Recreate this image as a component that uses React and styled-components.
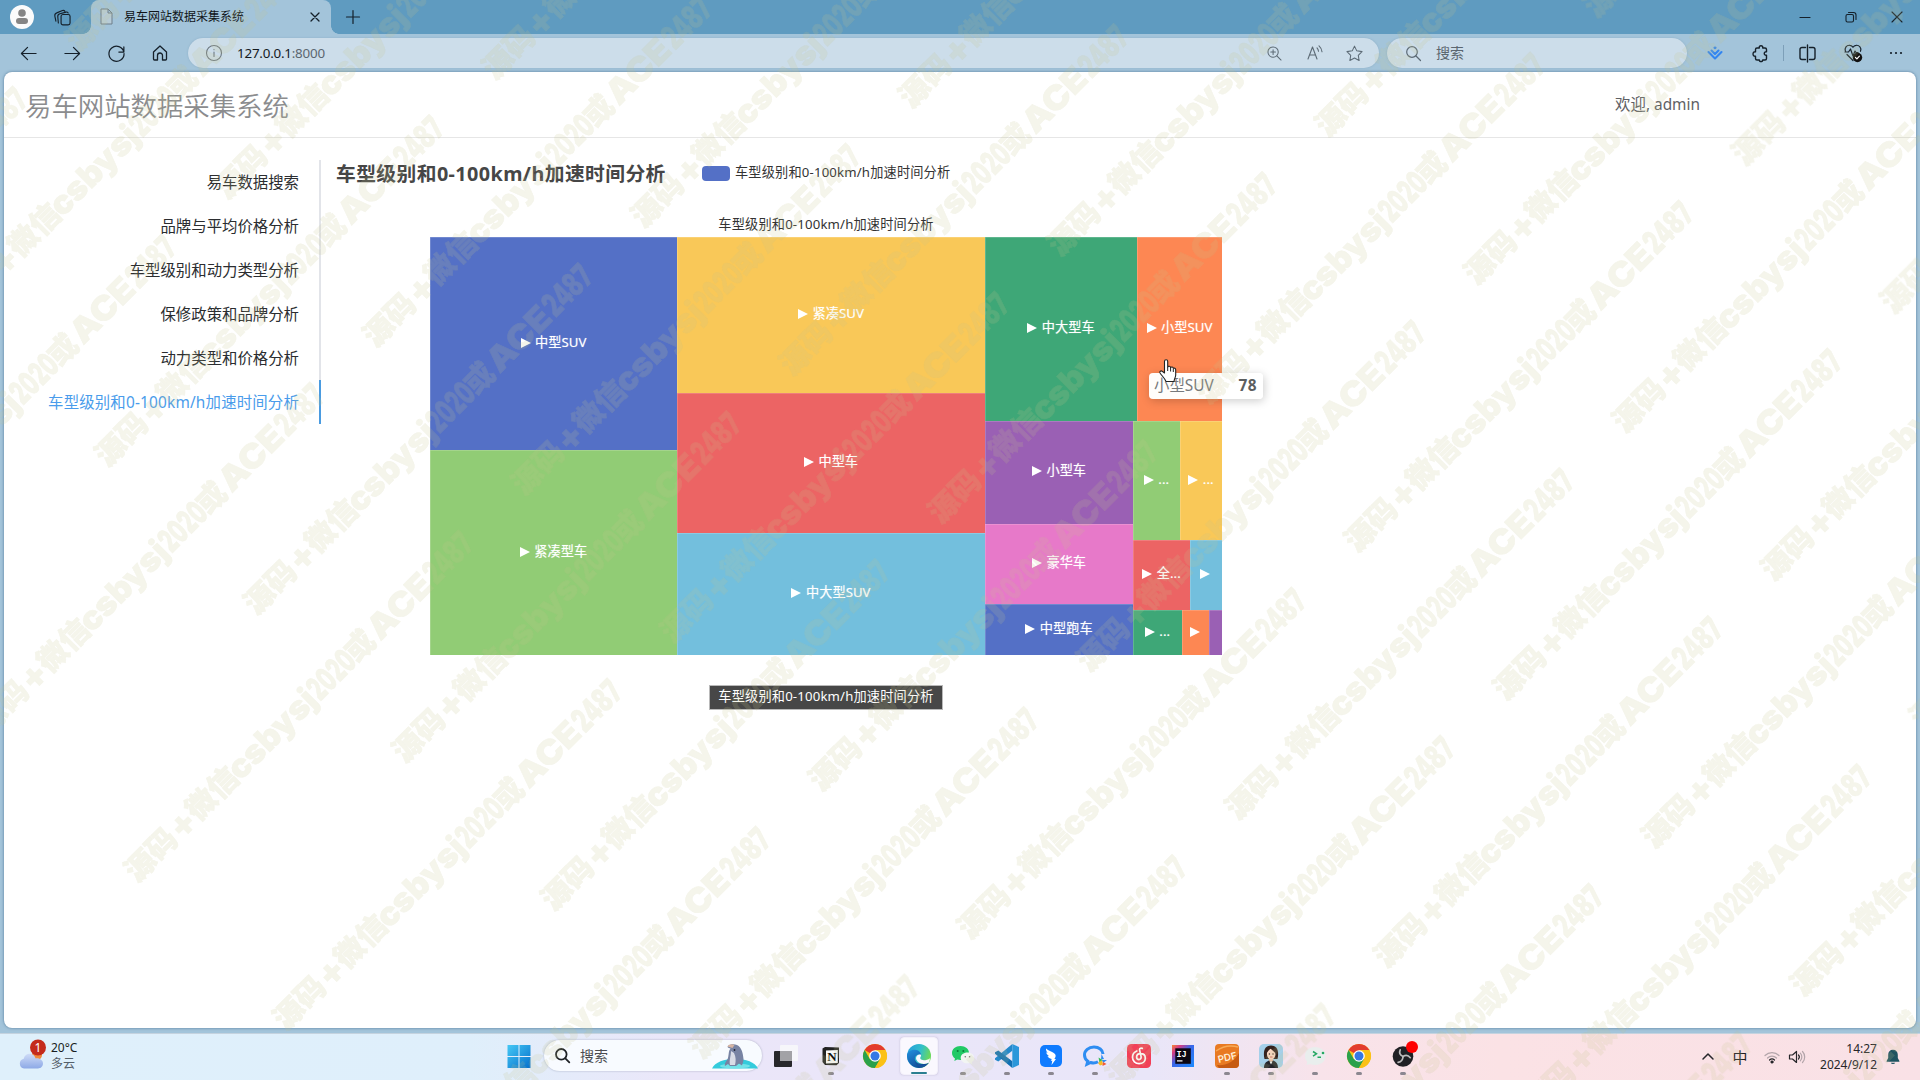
import React from 'react';
import styled, { createGlobalStyle } from 'styled-components';

const Global = createGlobalStyle`
  * { box-sizing: border-box; }
  html, body { margin: 0; padding: 0; overflow: hidden; }
  body { font-family: "Noto Sans", "Noto Sans CJK SC", sans-serif; color: #303133; }
`;

const Screen = styled.div`
  position: relative;
  width: 1920px;
  height: 1080px;
  display: flex;
  flex-direction: column;
  background: #a3c4da;
  overflow: hidden;
`;

/* ---------- browser chrome ---------- */
const TitleBar = styled.div`
  height: 34px;
  display: flex;
  align-items: stretch;
  background: #5f9bc0;
`;
const TitleCell = styled.div`
  width: ${(p) => p.$w}px;
  display: flex;
  align-items: center;
  justify-content: center;
`;
const Avatar = styled.div`
  width: 24px;
  height: 24px;
  border-radius: 50%;
  background: #fbfbfb;
  display: flex;
  align-items: center;
  justify-content: center;
`;
const Tab = styled.div`
  position: relative;
  width: 240px;
  margin-left: 11px;
  padding: 0 10px 1px 9px;
  display: flex;
  align-items: center;
  background: #a3c4da;
  border-radius: 8px 8px 0 0;
  &::before, &::after {
    content: '';
    position: absolute;
    bottom: 0;
    width: 8px;
    height: 8px;
  }
  &::before { left: -8px; background: radial-gradient(circle at 0 0, #5f9bc0 7.5px, #a3c4da 8px); }
  &::after { right: -8px; background: radial-gradient(circle at 100% 0, #5f9bc0 7.5px, #a3c4da 8px); }
`;
const TabTitle = styled.span`
  flex: 1;
  margin-left: 11px;
  font-size: 12px;
  line-height: 16px;
  color: #101418;
`;
const Grow = styled.div`flex: 1;`;

const ToolBar = styled.div`
  height: 38px;
  padding-left: 6px;
  display: flex;
  align-items: center;
`;
const ToolCell = styled.div`
  width: ${(p) => p.$w || 44}px;
  height: 38px;
  display: flex;
  align-items: center;
  justify-content: center;
`;
const Pill = styled.div`
  width: ${(p) => p.$w}px;
  height: 30px;
  margin-left: ${(p) => p.$ml}px;
  padding: 0 0 0 ${(p) => p.$pl}px;
  display: flex;
  align-items: center;
  border-radius: 15px;
  background: #ccddea;
  box-shadow: 0 0 2px rgba(90, 130, 160, 0.35);
  font-size: 14px;
  line-height: 20px;
  color: #5b6670;
`;
const Url = styled.span`
  flex: 1;
  margin-left: 15px;
  font-size: 13.4px;
  letter-spacing: -0.22px;
  b { font-weight: 400; color: #14191e; }
`;
const PillText = styled.span`margin-left: 15px;`;
const Divider = styled.div`
  width: 1px;
  height: 16px;
  background: #7d9fb8;
`;

const Line = styled.svg`
  display: block;
  flex: none;
  width: ${(p) => p.$s || 18}px;
  height: ${(p) => p.$s || 18}px;
  fill: none;
  stroke: ${(p) => p.$c || '#15202a'};
  stroke-width: ${(p) => p.$sw || 1.3};
  stroke-linecap: round;
  stroke-linejoin: round;
  overflow: visible;
`;

/* ---------- web page ---------- */
const Page = styled.div`
  width: 1912px;
  height: 956px;
  margin: 0 4px;
  flex: none;
  border-radius: 8px;
  background: #fff;
  box-shadow: 0 0 3px rgba(50, 90, 125, 0.7);
`;
const Header = styled.header`
  height: 66px;
  padding: 2px 216px 0 21px;
  display: flex;
  align-items: center;
  justify-content: space-between;
  border-bottom: 1px solid #e6e6e6;
`;
const Brand = styled.h1`
  margin: 0;
  font-size: 26.4px;
  line-height: 36px;
  font-weight: 350;
  color: #8b8c8e;
`;
const Welcome = styled.span`
  margin-bottom: 1px;
  font-size: 15.4px;
  line-height: 22px;
  color: #5e6064;
`;
const Body = styled.div`
  display: flex;
  padding-top: 22px;
`;
const SideNav = styled.nav`
  width: 317px;
  flex: none;
  display: flex;
  flex-direction: column;
`;
const NavItem = styled.a`
  height: 44px;
  padding: 2px 20px 0 0;
  font-size: 15.4px;
  line-height: 42px;
  letter-spacing: ${(p) => (p.$active ? 0.18 : 0)}px;
  text-align: right;
  color: ${(p) => (p.$active ? '#4a9ceb' : '#2b2d30')};
  border-right: 2px solid ${(p) => (p.$active ? '#4a9be0' : '#e2e4e9')};
`;
const ChartArea = styled.section`
  width: 980px;
  padding-left: 15px;
`;
const ChartTop = styled.div`
  height: 28px;
  padding-bottom: 1px;
  display: flex;
  align-items: center;
`;
const ChartTitle = styled.h2`
  margin: 0;
  width: 366px;
  padding-top: 1px;
  font-size: 19.8px;
  line-height: 28px;
  letter-spacing: 0.4px;
  font-weight: 700;
  color: #464646;
  white-space: nowrap;
`;
const LegendMark = styled.i`
  width: 28px;
  height: 15.5px;
  border-radius: 4px;
  background: #5470c6;
`;
const LegendText = styled.span`
  margin-left: 5px;
  padding-bottom: 3px;
  font-size: 13.2px;
  line-height: 18px;
  letter-spacing: 0.17px;
  color: #333;
`;
const Graph = styled.div`
  width: 792px;
  margin: 26px 0 0 94px;
  display: flex;
  flex-direction: column;
  align-items: center;
`;
const UpperLabel = styled.div`
  height: 23px;
  font-size: 13.2px;
  line-height: 20px;
  letter-spacing: 0.17px;
  color: #333;
`;
const TreeMap = styled.div`
  width: 792px;
  height: 418px;
  display: flex;
`;
const Split = styled.div`
  flex: ${(p) => p.$f} 0 0;
  min-width: 0;
  min-height: 0;
  display: flex;
  flex-direction: ${(p) => (p.$row ? 'row' : 'column')};
`;
const Tile = styled.div`
  flex: ${(p) => p.$f} 0 0;
  min-width: 0;
  min-height: 0;
  display: flex;
  align-items: center;
  justify-content: center;
  background: ${(p) => p.$c};
  box-shadow: inset 0.5px 0.5px 0 rgba(255, 255, 255, 0.35);
`;
const TileLabel = styled.span`
  display: flex;
  align-items: center;
  margin-bottom: 4px;
  color: #fff;
  font-size: 13.2px;
  line-height: 18px;
  white-space: nowrap;
  letter-spacing: 0.05px;
  text-shadow: 0 0 1px rgba(255, 255, 255, 0.5);
`;
const Arrow = styled.i`
  width: 0;
  height: 0;
  margin: 2px ${(p) => (p.$alone ? 2 : 4.5)}px 0 0;
  border-left: 10px solid #fff;
  border-top: 5.5px solid transparent;
  border-bottom: 5.5px solid transparent;
`;
const Crumb = styled.div`
  width: 234px;
  height: 25px;
  margin-top: 30px;
  border: 1px solid #b9b9b9;
  background: #474747;
  color: #fff;
  font-size: 13.2px;
  line-height: 21px;
  letter-spacing: 0.17px;
  text-align: center;
`;
const Tip = styled.div`
  position: absolute;
  left: 1149px;
  top: 373px;
  width: 114px;
  height: 26px;
  padding: 0 6px 1px 5px;
  display: flex;
  align-items: center;
  justify-content: space-between;
  border-radius: 4px;
  background: rgba(255, 255, 255, 0.98);
  box-shadow: 1px 2px 10px rgba(0, 0, 0, 0.2);
  font-size: 15.4px;
  line-height: 24px;
  color: #77797c;
  b { font-weight: 700; letter-spacing: 0.4px; color: #5c5e60; }
`;
const Pointer = styled.svg`
  position: absolute;
  left: 1158px;
  top: 358px;
  width: 20px;
  height: 26px;
`;

/* ---------- task bar ---------- */
const TaskBar = styled.footer`
  height: 47px;
  margin-top: 5px;
  display: flex;
  align-items: stretch;
  border-top: 1px solid #c5d3df;
  background: linear-gradient(90deg, #dff0fb 0, #dfeffb 470px, #ebe6f9 680px, #e9e6f9 1150px, #f8e3ea 1320px, #fbe2e5 1500px, #f9e1e6 100%);
`;
const Weather = styled.div`
  width: 497px;
  padding-left: 18px;
  display: flex;
  align-items: center;
`;
const WeatherText = styled.div`
  margin: 0 0 2px 7px;
  font-size: 12px;
  line-height: 16px;
  color: #1a1e22;
  span { color: #56606a; }
`;
const TaskCell = styled.div`
  width: ${(p) => p.$w || 44}px;
  flex: none;
  height: 46px;
  display: flex;
  flex-direction: column;
  align-items: center;
  padding-top: ${(p) => (p.$active ? 3 : 10)}px;
`;
const ActiveBox = styled.div`
  width: 38px;
  height: 38px;
  padding-top: 6px;
  display: flex;
  flex-direction: column;
  align-items: center;
  border-radius: 4px;
  border: 1px solid #f3f0fa;
  background: #faf8fe;
  box-shadow: 0 0 2px rgba(120, 110, 150, 0.35);
`;
const Dot = styled.i`
  width: ${(p) => (p.$on ? 16 : 6)}px;
  height: 3px;
  margin-top: 4px;
  border-radius: 2px;
  background: ${(p) => (p.$on ? '#2b7f90' : '#8b8790')};
`;
const Art = styled.svg`
  display: block;
  flex: none;
  width: ${(p) => p.$w || 24}px;
  height: ${(p) => p.$h || 24}px;
  overflow: visible;
`;
const TaskSearch = styled.div`
  width: 218px;
  height: 31px;
  margin: 6px 2px 0 3px;
  padding: 0 4px 0 11px;
  display: flex;
  align-items: center;
  border-radius: 16px;
  background: #f8fbff;
  box-shadow: 0 0 2px rgba(80, 90, 120, 0.45);
  font-size: 14px;
  line-height: 20px;
  color: #4a4c50;
  span { flex: 1; margin-left: 10px; }
`;
const Tray = styled.div`
  display: flex;
  align-items: center;
`;
const TrayCell = styled.div`
  width: ${(p) => p.$w}px;
  display: flex;
  justify-content: center;
  font-size: 15px;
  line-height: 20px;
  color: #1c1c20;
`;
const Clock = styled.div`
  width: 68px;
  margin-bottom: 1px;
  font-size: 12px;
  line-height: 16px;
  text-align: right;
  color: #26262a;
  white-space: nowrap;
`;

/* ---------- repeated overlay mark ---------- */
const MarkLayer = styled.svg`
  position: absolute;
  left: 0;
  top: 0;
  width: 1920px;
  height: 1080px;
  pointer-events: none;
  text {
    font-family: "Inter", "Noto Sans CJK SC", sans-serif;
    font-weight: 900;
    fill: #c3c38c;
    stroke: #c3c38c;
    stroke-width: 0.6px;
  }
`;
const markParts = [
  ['源码', -15, 60, 30, 11],
  ['+', 47, 24, 36, 13],
  ['微信', 71, 61, 30, 11],
  ['csbysj', 130, 112, 33, 12],
  ['2020', 243, 54, 33, 12],
  ['或', 296, 29, 30, 11],
  ['ACE', 328, 77, 33, 12],
  ['2487', 407, 56, 33, 12],
];
const marks = [];
for (let b = -2; b < 7; b += 1) {
  for (let a = -8; a < 9; a += 1) {
    const x = 230 + a * 148.6 + b * 416.5;
    const y = 182 + a * 148 + b * 28.5;
    if (x > -320 && x < 1930 && y > -10 && y < 1400) marks.push([x, y]);
  }
}
function Marks() {
  return (
    <MarkLayer viewBox="0 0 1920 1080">
      <g opacity="0.18">
        {marks.map(([x, y]) => (
          <g key={`${x}-${y}`} transform={`translate(${x} ${y}) rotate(-45)`}>
            {markParts.map(([t, tx, len, size, base]) => (
              <text key={t} x={tx} y={base} fontSize={size} textLength={len} lengthAdjust="spacingAndGlyphs">{t}</text>
            ))}
          </g>
        ))}
      </g>
    </MarkLayer>
  );
}

const NAME = '车型级别和0-100km/h加速时间分析';
const nav = ['易车数据搜索', '品牌与平均价格分析', '车型级别和动力类型分析', '保修政策和品牌分析', '动力类型和价格分析', NAME];

const C = {
  blue: '#5470c6', green: '#91cc75', yellow: '#f9c858', red: '#ec6464', sky: '#73bfdd',
  teal: '#3ea777', orange: '#fd8753', purple: '#9a60b4', pink: '#e779c9',
};

function Cell({ f, c, label, bare }) {
  return (
    <Tile $f={f} $c={c}>
      {!bare && (
        <TileLabel>
          <Arrow $alone={!label} />
          {label}
        </TileLabel>
      )}
    </Tile>
  );
}

function Chrome() {
  return (
    <Art viewBox="0 0 24 24">
      <circle cx="12" cy="12" r="12" fill="#fbc116" />
      <path d="M12 12 1.6 6A12 12 0 0 1 22.4 6H12z" fill="#e33b2e" />
      <path d="M1.6 6A12 12 0 0 0 12 24l5.2-9L12 12 6.800 15z" fill="#2aa14b" />
      <path d="M22.4 6H12l5.2 9L12 24A12 12 0 0 0 22.400 6z" fill="#fbc116" />
      <circle cx="12" cy="12" r="5.8" fill="#fff" />
      <circle cx="12" cy="12" r="4.5" fill="#3578e5" />
    </Art>
  );
}

const apps = [
  ['notion', (
    <Art viewBox="0 0 24 24">
      <path d="M3.5 4.500 6 3l14 .5V19l-2.500 2.200L6 21l-2.500-3z" fill="#222" />
      <path d="M7 6.500 18.800 6v13L7 19.600z" fill="#fafafa" />
      <text x="12.900" y="17.400" textAnchor="middle" fontFamily="Liberation Serif, serif" fontWeight="700" fontSize="13" fill="#111">N</text>
    </Art>
  ), 1],
  ['chrome', <Chrome />, 0],
  ['edge', (
    <Art viewBox="0 0 24 24">
      <defs>
        <linearGradient id="e1" x1="0" y1="0" x2="1" y2="0.3"><stop offset="0" stopColor="#259bdc" /><stop offset="0.6" stopColor="#32bfca" /><stop offset="1" stopColor="#69d85c" /></linearGradient>
        <linearGradient id="e2" x1="0" y1="0" x2="0.6" y2="1"><stop offset="0" stopColor="#218fe0" /><stop offset="1" stopColor="#114b94" /></linearGradient>
      </defs>
      <circle cx="12" cy="12" r="12" fill="url(#e1)" />
      <path d="M0 12c0-4 4-6.500 8-6.200 3.500.3 6 2.600 6.100 5.300-3-1.600-6.300.3-6.300 3.700 0 4.200 5 6.600 13.800 4.300A12 12 0 0 1 0 12z" fill="url(#e2)" />
      <path d="M14 10.800c.6 1.800-1.300 2.500-.6 4 1.100 2 6 2 9.600-.6l-.8 4.600c-5 2.300-11.500 1.200-13-3.500-.7-3 2-5.500 4.800-4.500z" fill="#faf8fe" />
      <path d="M22 18.300C18 22.700 10 22.500 7.900 16c.3 4 3 6.800 7 7.600 3-.8 5.500-2.600 7.100-5.300z" fill="#17529c" />
    </Art>
  ), 2],
  ['wechat', (
    <Art viewBox="0 0 24 24">
      <path d="M9.500 2C4.500 2 1 5 1 9c0 2.300 1.200 4.200 3 5.500L3.300 17l3-1.400c1 .3 2 .4 3.200.4 5 0 8.500-3 8.500-7s-3.500-7-8.500-7z" fill="#21c965" />
      <circle cx="6.700" cy="7" r="1" fill="#0b7a3a" /><circle cx="12.300" cy="7" r="1" fill="#0b7a3a" />
      <path d="M16.500 8.500c-4 0-6.800 2.400-6.800 5.400s2.900 5.400 6.800 5.400c.8 0 1.600-.1 2.300-.3l2.500 1.200-.6-2c1.600-1 2.500-2.500 2.500-4.300 0-3-2.800-5.400-6.700-5.400z" fill="#f2f5f3" />
      <circle cx="14.300" cy="12.800" r=".8" fill="#777" /><circle cx="18.600" cy="12.800" r=".8" fill="#777" />
    </Art>
  ), 1],
  ['vscode', (
    <Art viewBox="0 0 24 24">
      <path d="M17.300 0v6.800L3.300 17.600 0 15.700v-1.500z" fill="#2489ca" />
      <path d="M17.300 24v-6.800L3.300 6.400 0 8.300v1.500z" fill="#1070b3" />
      <path d="M17.300 0 24 3v18l-6.700 3z" fill="#2b97da" />
    </Art>
  ), 1],
  ['wing', (
    <Art viewBox="0 0 24 24">
      <rect x="1" y="1" width="22" height="22" rx="5" fill="#0f7bff" />
      <path d="M7 4.500c2 2 7 3.200 9 5.500 1.300 1.500.5 3.500-.6 5h1.600L12.500 21l.8-4.200h-1.500l1-1.800c-2.500-.5-4-1.800-4.300-2.900l1.800.2C8.300 11 7.200 9.500 7.300 8.300l1.500.7C7.500 7.700 6.800 6 7 4.500z" fill="#fff" />
    </Art>
  ), 1],
  ['bubble', (
    <Art viewBox="0 0 24 24">
      <path d="M11 3C5.500 3 1.500 6.500 1.500 11c0 2.700 1.300 4.800 3.300 6.200L4 20.300l3.600-1.800c3 .9 5.600.3 7.400-.8" fill="none" stroke="#2e8df2" strokeWidth="3" />
      <path d="M11 3c5 0 8.800 3 9 7" fill="none" stroke="#2e8df2" strokeWidth="3" />
      <path d="m18.500 10 2.500 5-3 .5zM24 16l-4 3-1-3z" fill="#2e8df2" />
      <path d="m15.500 13.500 4 2.500-3 2.500z" fill="#32bd55" />
      <path d="m15 19 4-2.500 1 4-3 1z" fill="#f7b924" />
      <path d="m20 18 3.500 2-4 2z" fill="#f05a35" />
    </Art>
  ), 1],
  ['music', (
    <Art viewBox="0 0 24 24">
      <rect width="24" height="24" rx="4.500" fill="#f23f57" />
      <path d="M15.300 4.400c-1.800-.8-3 .2-2.700 1.700l1.500 6.500c.3 1.900-.8 3-2.100 3-1.500 0-2.400-1.100-2.400-2.500 0-2 1.700-3.500 4-3.500 3 0 4.700 2 4.700 4.600 0 3.200-2.700 5.500-6.200 5.500-3.800 0-6.600-2.700-6.600-6.400 0-3 1.700-5.300 4.300-6.300" fill="none" stroke="#fff" strokeWidth="1.700" strokeLinecap="round" />
    </Art>
  ), 0],
  ['ij', (
    <Art viewBox="0 0 24 24">
      <defs><linearGradient id="ij" x1="0" y1="0" x2="1" y2="1"><stop offset="0" stopColor="#f78a35" /><stop offset=".2" stopColor="#d63b83" /><stop offset=".45" stopColor="#3b66e8" /><stop offset="1" stopColor="#1b8cff" /></linearGradient></defs>
      <rect x="1" y="1" width="22" height="22" fill="url(#ij)" />
      <rect x="4.300" y="4.300" width="15.500" height="15.500" fill="#0c0712" />
      <text x="5.500" y="12.500" fontFamily="Liberation Mono, monospace" fontWeight="700" fontSize="8.500" fill="#fff">IJ</text>
      <rect x="6" y="16.300" width="5.500" height="1.200" fill="#fff" />
    </Art>
  ), 0],
  ['pdf', (
    <Art viewBox="0 0 24 24">
      <rect width="24" height="24" rx="4" fill="#e97a22" />
      <path d="M2 21C12 22 20 17 24 9v11a4 4 0 0 1-4 4H4z" fill="#c65a12" />
      <path d="M1 7C8 2 16 1 23 3" stroke="#f7ab58" strokeWidth="1.500" fill="none" />
      <text x="2.500" y="17" fontFamily="Inter, sans-serif" fontWeight="600" fontSize="9.800" fill="#fff0dc" transform="rotate(-13 12 13)">PDF</text>
    </Art>
  ), 1],
  ['person', (
    <Art viewBox="0 0 24 24">
      <rect width="24" height="24" rx="5" fill="#a5d0ea" />
      <path d="M5.500 15C3.500 6 6.500 1.500 12 1.500S20.500 6 18.500 15z" fill="#35231f" />
      <path d="M10 13h4v5h-4z" fill="#efbfa8" />
      <ellipse cx="12.200" cy="10" rx="4.300" ry="5.600" fill="#fad7c4" />
      <path d="M7.500 10c.5-3 2.500-3.500 4-5.500 1.500 2 4 2.500 5.200 5.500V5L12 2 7.500 5z" fill="#35231f" />
      <circle cx="10.400" cy="10" r=".7" fill="#331f1b" /><circle cx="14" cy="10" r=".7" fill="#331f1b" />
      <path d="M11 13h2.500" stroke="#c84b4b" strokeWidth=".8" />
      <path d="M5 24c0-5 2.500-6.500 5-7.500l2 1.500 2.200-1.500c2.800 1 4.800 3 4.800 7.500z" fill="#23242a" />
      <path d="m10.500 17.500 1.500 3 1.500-3z" fill="#f7f7f7" />
    </Art>
  ), 1],
  ['term', (
    <Art viewBox="0 0 24 24">
      <path d="M12 3C5.800 3 2 6.800 2 12c0 2.300.8 4.300 2.200 5.800L3.500 21l3.700-1c1.500.6 3.200.9 4.800.9 6.200 0 10.500-3.700 10.500-9S18.200 3 12 3z" fill="#e9eeed" />
      <path d="m10 7.500 3.500 2.300L10 12.200M14.500 13.300h3.500" stroke="#25a863" strokeWidth="1.500" fill="none" />
      <circle cx="20" cy="9" r="1.300" fill="#25a863" />
    </Art>
  ), 1],
  ['chrome2', <Chrome />, 1],
  ['obs', (
    <Art viewBox="0 0 24 24">
      <circle cx="12" cy="12.500" r="10.300" fill="#202024" />
      <g fill="none" stroke="#bbb" strokeWidth="1.700" strokeLinecap="round">
        <path d="M12 12.500C9 11 8 8.500 9.200 5.800" /><path d="M12 12.500c2.900-1.700 5.500-1 7.300 1.200" /><path d="M12 12.500c-.1 3.300-1.900 5.400-4.900 5.800" />
      </g>
      <circle cx="21" cy="3" r="6" fill="#fe0000" />
    </Art>
  ), 1],
];

export default function App() {
  return (
    <Screen>
      <Global />
      <TitleBar>
        <TitleCell $w={44}>
          <Avatar>
            <Art $w={14} $h={16} viewBox="0 0 14 16"><circle cx="7" cy="4" r="3.800" fill="#858585" /><rect x="1" y="9" width="12" height="6" rx="3" fill="#858585" /></Art>
          </Avatar>
        </TitleCell>
        <TitleCell $w={36}>
          <Line $s={17} viewBox="0 0 18 18" $sw={1.2}>
            <rect x="7.500" y="5.800" width="9.500" height="11" rx="2" />
            <path d="M4.600 14.800 4 8.200c-.2-1.600.6-2.700 2.200-3.200l6.500-1.700c1-.2 1.800 0 2.300.9M2 12.800.9 7.500C.6 5.900 1.300 4.700 2.900 4.100L9 1.600c1-.4 1.900-.1 2.400.7" />
          </Line>
        </TitleCell>
        <Tab>
          <Art $w={13} $h={17} viewBox="0 0 13 17"><path d="M1 1h7l4 4v11H1zM8 1v4h4" fill="#b7ccd8" stroke="#6f7f8a" strokeWidth="1" /></Art>
          <TabTitle>易车网站数据采集系统</TabTitle>
          <Line $s={12} viewBox="0 0 12 12" $sw={1.3}><path d="m2 2 8 8M10 2l-8 8" /></Line>
        </Tab>
        <TitleCell $w={43}><Line $s={14} viewBox="0 0 14 14" $sw={1.2}><path d="M7 .5v13M.5 7h13" /></Line></TitleCell>
        <Grow />
        <TitleCell $w={46}><Line $s={10} viewBox="0 0 10 10" $sw={1.2}><path d="M0 5.500h10" /></Line></TitleCell>
        <TitleCell $w={46}><Line $s={10} viewBox="0 0 10 10" $sw={1.1}><rect x="0" y="2.500" width="7.500" height="7.500" rx="1.500" /><path d="M2.500.5h5a2.500 2.500 0 0 1 2.500 2.500v4.500" /></Line></TitleCell>
        <TitleCell $w={46}><Line $s={10} viewBox="0 0 10 10" $sw={1.1}><path d="m0 0 10 10M10 0 0 10" /></Line></TitleCell>
      </TitleBar>

      <ToolBar>
        <ToolCell><Line $s={17} viewBox="0 0 18 18"><path d="M17 9H1.500M8 2.500 1.500 9 8 15.500" /></Line></ToolCell>
        <ToolCell><Line $s={17} viewBox="0 0 18 18"><path d="M1 9h15.500M10 2.500 16.500 9 10 15.500" /></Line></ToolCell>
        <ToolCell><Line $s={17} viewBox="0 0 18 18"><path d="M16.800 7.500A8 8 0 1 0 17 9M16.800 2v5.500H11.500" /></Line></ToolCell>
        <ToolCell><Line $s={16} viewBox="0 0 16 16"><path d="M1.500 7 8 1l6.500 6v7a1 1 0 0 1-1 1h-3v-4.500a2.500 2.500 0 0 0-5 0V15h-3a1 1 0 0 1-1-1z" /></Line></ToolCell>
        <Pill $w={1191} $ml={6} $pl={18}>
          <Line $s={16} $c="#6c7780" $sw={1.1} viewBox="0 0 16 16"><circle cx="8" cy="8" r="7.500" /><path d="M8 7v4.500M8 4.500v.2" /></Line>
          <Url><b>127.0.0.1</b>:8000</Url>
          <ToolCell $w={40}><Line $s={15} $c="#5c6a75" $sw={1.1} viewBox="0 0 16 16"><circle cx="6.500" cy="6.500" r="5.500" /><path d="m10.500 10.500 4.500 4.500M6.500 4v5M4 6.500h5" /></Line></ToolCell>
          <ToolCell $w={41}><Line $s={16} $c="#5c6a75" $sw={1.1} viewBox="0 0 16 16"><path d="m1 14 4.500-12L10 14M2.600 10h5.800M10 2.800a6 6 0 0 1 1.500 3.500M12 .8a9 9 0 0 1 3 6" /></Line></ToolCell>
          <ToolCell $w={39}><Line $s={17} $c="#5c6a75" $sw={1.1} viewBox="0 0 18 18"><path d="m9 1.200 2.400 5 5.600.8-4 3.900.9 5.500L9 13.800l-4.900 2.600.9-5.500L1 7l5.600-.8z" /></Line></ToolCell>
          <ToolCell $w={5} />
        </Pill>
        <Pill $w={300} $ml={8} $pl={19}>
          <Line $s={15} $c="#5c6a75" $sw={1.2} viewBox="0 0 15 15"><circle cx="6" cy="6" r="5.300" /><path d="m10 10 4.500 4.500" /></Line>
          <PillText>搜索</PillText>
        </Pill>
        <ToolCell $w={5} />
        <ToolCell $w={46}><Line $s={16} $c="#3285f0" $sw={2.1} viewBox="0 0 16 16"><path d="m1.500 7 6.500 6.500L14.500 7M4.500 5.500 8 9l3.500-3.500M7.500 2.700 8 3.200l.5-.5" /></Line></ToolCell>
        <ToolCell $w={45}><Line $s={17} $sw={1.4} viewBox="0 0 17 17"><path d="M5 3h2.300c-.8-3 4.200-3 3.400 0H13a1.500 1.500 0 0 1 1.500 1.500v2.300c-3-.6-3 4 0 3.400v3.300A1.500 1.500 0 0 1 13 15h-2.300c.5 2-3.900 2-3.400 0H5a1.500 1.500 0 0 1-1.500-1.500v-2.300c-3.300.5-3.300-4.900 0-4.400V4.500A1.500 1.500 0 0 1 5 3z" /></Line></ToolCell>
        <Divider />
        <ToolCell $w={47}><Line $s={17} $sw={1.4} viewBox="0 0 17 17"><path d="M6.500 2.500H3a2 2 0 0 0-2 2v8a2 2 0 0 0 2 2h3.500M10.500 2.500H14a2 2 0 0 1 2 2v8a2 2 0 0 1-2 2h-3.500M8.500 0v17" /></Line></ToolCell>
        <ToolCell $w={43}>
          <Line $s={18} $sw={1.2} viewBox="0 0 18 18"><path d="M1.500 8C-.2 4 3 .8 6 1.300c1.500.2 2.500 1.200 3 2 .5-.8 1.500-1.800 3-2 3-.5 6 2.700 4.500 6M3 10.500l6 6M1 8h3.500L6.500 5l2.500 7 2-5 1 1.500h2" /><circle cx="13.500" cy="13.500" r="4.700" fill="#111" stroke="none" /><path d="m11.500 13.500 1.400 1.400 2.500-2.700" stroke="#fff" /></Line>
        </ToolCell>
        <ToolCell $w={44}><Line $s={14} viewBox="0 0 14 14" $sw={2.2}><path d="M2 7h.01M7 7h.01M12 7h.01" /></Line></ToolCell>
      </ToolBar>

      <Page>
        <Header>
          <Brand>易车网站数据采集系统</Brand>
          <Welcome>欢迎, admin</Welcome>
        </Header>
        <Body>
          <SideNav>
            {nav.map((t) => <NavItem key={t} $active={t === NAME}>{t}</NavItem>)}
          </SideNav>
          <ChartArea>
            <ChartTop>
              <ChartTitle>{NAME}</ChartTitle>
              <LegendMark />
              <LegendText>{NAME}</LegendText>
            </ChartTop>
            <Graph>
              <UpperLabel>{NAME}</UpperLabel>
              <TreeMap>
                <Split $f={247}>
                  <Cell f={213} c={C.blue} label="中型SUV" />
                  <Cell f={205} c={C.green} label="紧凑型车" />
                </Split>
                <Split $f={308}>
                  <Cell f={156} c={C.yellow} label="紧凑SUV" />
                  <Cell f={140} c={C.red} label="中型车" />
                  <Cell f={122} c={C.sky} label="中大型SUV" />
                </Split>
                <Split $f={237}>
                  <Split $f={184} $row>
                    <Cell f={152} c={C.teal} label="中大型车" />
                    <Cell f={85} c={C.orange} label="小型SUV" />
                  </Split>
                  <Split $f={234} $row>
                    <Split $f={148}>
                      <Cell f={102.5} c={C.purple} label="小型车" />
                      <Cell f={80.5} c={C.pink} label="豪华车" />
                      <Cell f={51} c={C.blue} label="中型跑车" />
                    </Split>
                    <Split $f={89}>
                      <Split $f={119} $row>
                        <Cell f={47} c={C.green} label="..." />
                        <Cell f={42} c={C.yellow} label="..." />
                      </Split>
                      <Split $f={70} $row>
                        <Cell f={57} c={C.red} label="全..." />
                        <Cell f={32} c={C.sky} />
                      </Split>
                      <Split $f={45} $row>
                        <Cell f={49} c={C.teal} label="..." />
                        <Cell f={27} c={C.orange} />
                        <Cell f={13} c={C.purple} bare />
                      </Split>
                    </Split>
                  </Split>
                </Split>
              </TreeMap>
              <Crumb>{NAME}</Crumb>
            </Graph>
          </ChartArea>
        </Body>
      </Page>

      <TaskBar>
        <Weather>
          <Art $w={26} $h={30} viewBox="0 0 26 30">
            <defs><linearGradient id="cl" x1="0" y1="0" x2="0" y2="1"><stop offset="0" stopColor="#cfdcf7" /><stop offset="1" stopColor="#8da9e6" /></linearGradient></defs>
            <circle cx="19" cy="13" r="5" fill="#f08a3c" />
            <path d="M6 26.500a5 5 0 0 1-.3-9.800C6.500 13 9.500 11.500 12 11.800c3 .2 5 2.200 5.600 4.600 4-.3 7.400 1.800 7.400 5.200 0 3-2.200 4.900-5 4.900z" fill="url(#cl)" />
            <circle cx="20" cy="5.500" r="8" fill="#c42b1c" />
            <text x="20" y="10" textAnchor="middle" fontSize="12" fill="#fff">1</text>
          </Art>
          <WeatherText>20°C<br /><span>多云</span></WeatherText>
        </Weather>
        <TaskCell>
          <Art viewBox="0 0 24 24">
            <defs><linearGradient id="w" x1="0" y1="0" x2="1" y2="1"><stop offset="0" stopColor="#45c8f5" /><stop offset="1" stopColor="#0670cc" /></linearGradient></defs>
            <path d="M.5 1h11v11H.5zM12.500 1h11v11h-11zM.5 13h11v11H.5zM12.500 13h11v11h-11z" fill="url(#w)" />
          </Art>
        </TaskCell>
        <TaskSearch>
          <Line $s={15} $c="#1f2226" $sw={1.8} viewBox="0 0 15 15"><circle cx="6.300" cy="6.300" r="5.300" /><path d="m10.300 10.300 4 4" /></Line>
          <span>搜索</span>
          <Art $w={46} $h={26} viewBox="0 0 46 26">
            <path d="M0 25.500C3 19 12 16 23 16s20 3 23 9.500z" fill="#34cbdc" />
            <ellipse cx="23" cy="23" rx="15" ry="2.500" fill="#72e2e8" />
            <path d="M13 23c-1-3 2-5 3-8 1-5 .5-7 2.500-9.500C16 5 15 4 16 3c2-2 6-2.500 9-1 5 2.500 6 9 6.500 14 .2 2.500-1 4.500-1.500 6.500l-3-2-3 2.500h-6l-2-2z" fill="#7883a3" />
            <path d="M19 8c0 5-2 9-1 14h5c1-4 1-8-1-12z" fill="#d9dce6" />
            <path d="M15.500 3.500c1-2 4-3 7-1.500l-2 3z" fill="#d6b5a4" />
            <circle cx="22.500" cy="7" r=".9" fill="#1f2435" />
          </Art>
        </TaskSearch>
        <TaskCell $w={43}>
          <Art viewBox="0 0 24 24">
            <rect x="0" y="7" width="18" height="16" rx="1" fill="#27272b" />
            <rect x="6" y="1" width="18" height="16" rx="1" fill="#f7f7f9" fillOpacity="0.9" />
            <rect x="6" y="7" width="12" height="10" fill="#a2a2a6" />
          </Art>
        </TaskCell>
        <TaskCell $w={2} />
        {apps.map(([id, art, state]) => (
          <TaskCell key={id} $active={state === 2}>
            {state === 2
              ? <ActiveBox>{art}<Dot $on /></ActiveBox>
              : <>{art}{state === 1 && <Dot />}</>}
          </TaskCell>
        ))}
        <Grow />
        <Tray>
          <TrayCell $w={32}><Line $s={10} viewBox="0 0 10 10" $sw={1.5} $c="#26262a"><path d="m0 7 5-5 5 5" /></Line></TrayCell>
          <TrayCell $w={32}>中</TrayCell>
          <TrayCell $w={32}>
            <Line $s={16} viewBox="0 0 16 16" $sw={1.2} $c="#b3a5aa"><path d="M1 6.500a10 10 0 0 1 14 0M3.500 9a6.500 6.500 0 0 1 9 0" /><path d="M5.500 11a3.600 3.600 0 0 1 5 0" stroke="#26262a" /><circle cx="8" cy="13" r="1.300" fill="#26262a" stroke="#26262a" strokeWidth=".5" /></Line>
          </TrayCell>
          <TrayCell $w={17}>
            <Line $s={16} viewBox="0 0 16 16" $sw={1.2} $c="#26262a"><path d="M.5 6h3L7.500 2.500v11L3.500 10h-3zM9.500 6a3 3 0 0 1 0 4" /><path d="M11.300 4.200a5.500 5.500 0 0 1 0 7.600M13.500 2.500a8 8 0 0 1 0 11" stroke="#b3a5aa" /></Line>
          </TrayCell>
          <TrayCell $w={4} />
          <Clock>14:27<br />2024/9/12</Clock>
          <TrayCell $w={31}>
            <Art $w={14} $h={16} viewBox="0 0 14 16"><path d="M7 .8c-3 0-4.800 2-4.800 5V9L.6 12v.8h12.800V12l-1.600-3V5.800c0-3-1.800-5-4.800-5zM4.800 13.700a2.300 2 0 0 0 4.400 0z" fill="#1d5360" /></Art>
          </TrayCell>
          <TrayCell $w={12} />
        </Tray>
      </TaskBar>

      <Tip><span>小型SUV</span><b>78</b></Tip>
      <Marks />
      <Pointer viewBox="0 0 20 26">
        <path d="M6.500 15V3.500c0-2.400 3.200-2.400 3.200 0V9c.5-1.200 2.700-1 2.900.6.700-1 2.500-.7 2.700.8.900-.7 2.400-.2 2.400 1.400V17c0 2-1.300 3.500-1.700 6.500H8C7 20.500 4.500 18.500 2 15c-.8-1.600 1-2.700 2.200-1.700z" fill="#fff" stroke="#222" strokeWidth="1.100" strokeLinejoin="round" />
        <path d="M9.700 9v4M12.600 10v3.500M15.300 11v3" stroke="#222" strokeWidth="1" />
      </Pointer>
    </Screen>
  );
}
